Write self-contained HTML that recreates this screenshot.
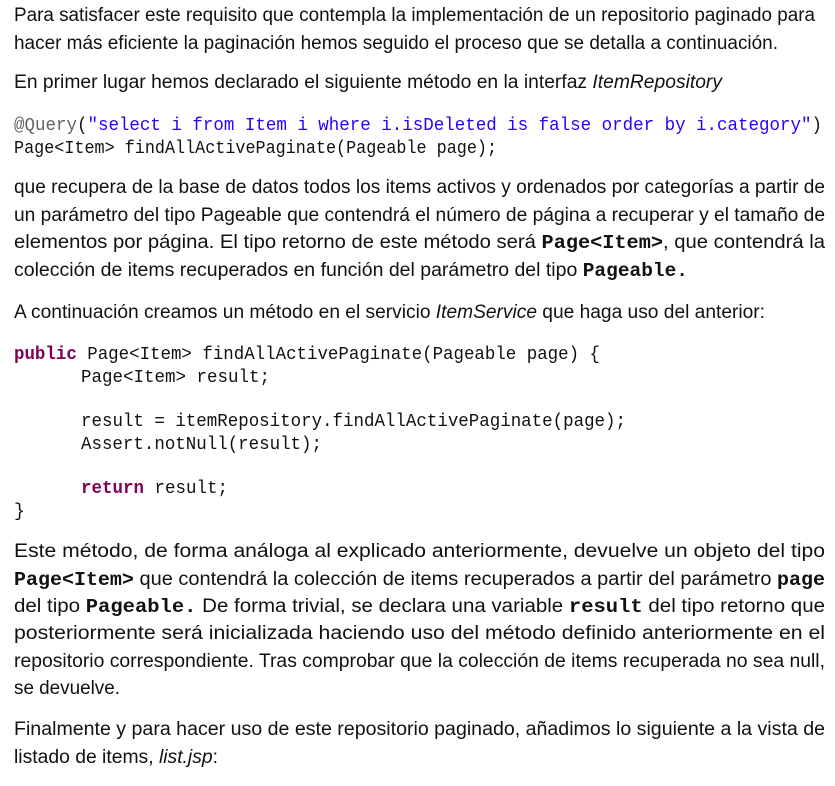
<!DOCTYPE html>
<html><head><meta charset="utf-8"><style>
html,body{margin:0;padding:0;background:#fff;width:835px;height:786px;overflow:hidden}
svg{display:block}
.t{font-family:"Liberation Sans",sans-serif;font-size:19px;fill:#111}
.c{font-family:"Liberation Mono",monospace;font-size:18px;fill:#111}
.b{font-family:"Liberation Mono",monospace;font-weight:bold}
.i{font-style:italic}
.kw{fill:#7f0055;font-weight:bold}
.str{fill:#2a00ff}
.an{fill:#646464}
</style></head><body>
<svg width="835" height="786" xmlns="http://www.w3.org/2000/svg" xml:space="preserve">
<text class="t" x="14" y="21" textLength="801" lengthAdjust="spacingAndGlyphs">Para satisfacer este requisito que contempla la implementación de un repositorio paginado para</text>
<text class="t" x="14" y="49" textLength="764" lengthAdjust="spacingAndGlyphs">hacer más eficiente la paginación hemos seguido el proceso que se detalla a continuación.</text>
<text class="t" x="14" y="88" textLength="708" lengthAdjust="spacingAndGlyphs">En primer lugar hemos declarado el siguiente método en la interfaz <tspan class="i">ItemRepository</tspan></text>
<text class="c" x="14" y="130" textLength="808" lengthAdjust="spacingAndGlyphs"><tspan class="an">@Query</tspan>(<tspan class="str">"select i from Item i where i.isDeleted is false order by i.category"</tspan>)</text>
<text class="c" x="14" y="153" textLength="483" lengthAdjust="spacingAndGlyphs">Page&lt;Item&gt; findAllActivePaginate(Pageable page);</text>
<text class="t" x="14" y="193" textLength="811" lengthAdjust="spacingAndGlyphs">que recupera de la base de datos todos los items activos y ordenados por categorías a partir de</text>
<text class="t" x="14" y="221" textLength="811" lengthAdjust="spacingAndGlyphs">un parámetro del tipo Pageable que contendrá el número de página a recuperar y el tamaño de</text>
<text class="t" x="14" y="248" textLength="811" lengthAdjust="spacingAndGlyphs">elementos por página. El tipo retorno de este método será <tspan class="b">Page&lt;Item&gt;</tspan>, que contendrá la</text>
<text class="t" x="14" y="276" textLength="674" lengthAdjust="spacingAndGlyphs">colección de items recuperados en función del parámetro del tipo <tspan class="b">Pageable.</tspan></text>
<text class="t" x="14" y="318" textLength="751" lengthAdjust="spacingAndGlyphs">A continuación creamos un método en el servicio <tspan class="i">ItemService</tspan> que haga uso del anterior:</text>
<text class="c" x="14" y="359" textLength="586" lengthAdjust="spacingAndGlyphs"><tspan class="kw">public</tspan> Page&lt;Item&gt; findAllActivePaginate(Pageable page) {</text>
<text class="c" x="81" y="382" textLength="189" lengthAdjust="spacingAndGlyphs">Page&lt;Item&gt; result;</text>
<text class="c" x="81" y="426" textLength="545" lengthAdjust="spacingAndGlyphs">result = itemRepository.findAllActivePaginate(page);</text>
<text class="c" x="81" y="449" textLength="241" lengthAdjust="spacingAndGlyphs">Assert.notNull(result);</text>
<text class="c" x="81" y="493" textLength="147" lengthAdjust="spacingAndGlyphs"><tspan class="kw">return</tspan> result;</text>
<text class="c" x="14" y="516">}</text>
<text class="t" x="14" y="557" textLength="811" lengthAdjust="spacingAndGlyphs">Este método, de forma análoga al explicado anteriormente, devuelve un objeto del tipo</text>
<text class="t" x="14" y="585" textLength="811" lengthAdjust="spacingAndGlyphs"><tspan class="b">Page&lt;Item&gt;</tspan>  que contendrá la colección de items recuperados a partir del parámetro <tspan class="b">page</tspan></text>
<text class="t" x="14" y="612" textLength="811" lengthAdjust="spacingAndGlyphs">del tipo <tspan class="b">Pageable.</tspan>  De forma trivial, se declara una variable <tspan class="b">result</tspan>  del tipo retorno que</text>
<text class="t" x="14" y="639" textLength="811" lengthAdjust="spacingAndGlyphs">posteriormente será inicializada haciendo uso del método definido anteriormente en el</text>
<text class="t" x="14" y="667" textLength="811" lengthAdjust="spacingAndGlyphs">repositorio correspondiente. Tras comprobar que la colección de items recuperada no sea null,</text>
<text class="t" x="14" y="694" textLength="106" lengthAdjust="spacingAndGlyphs">se devuelve.</text>
<text class="t" x="14" y="735" textLength="811" lengthAdjust="spacingAndGlyphs">Finalmente y para hacer uso de este repositorio paginado, añadimos lo siguiente a la vista de</text>
<text class="t" x="14" y="763" textLength="204" lengthAdjust="spacingAndGlyphs">listado de items, <tspan class="i">list.jsp</tspan>:</text>
</svg>
</body></html>
